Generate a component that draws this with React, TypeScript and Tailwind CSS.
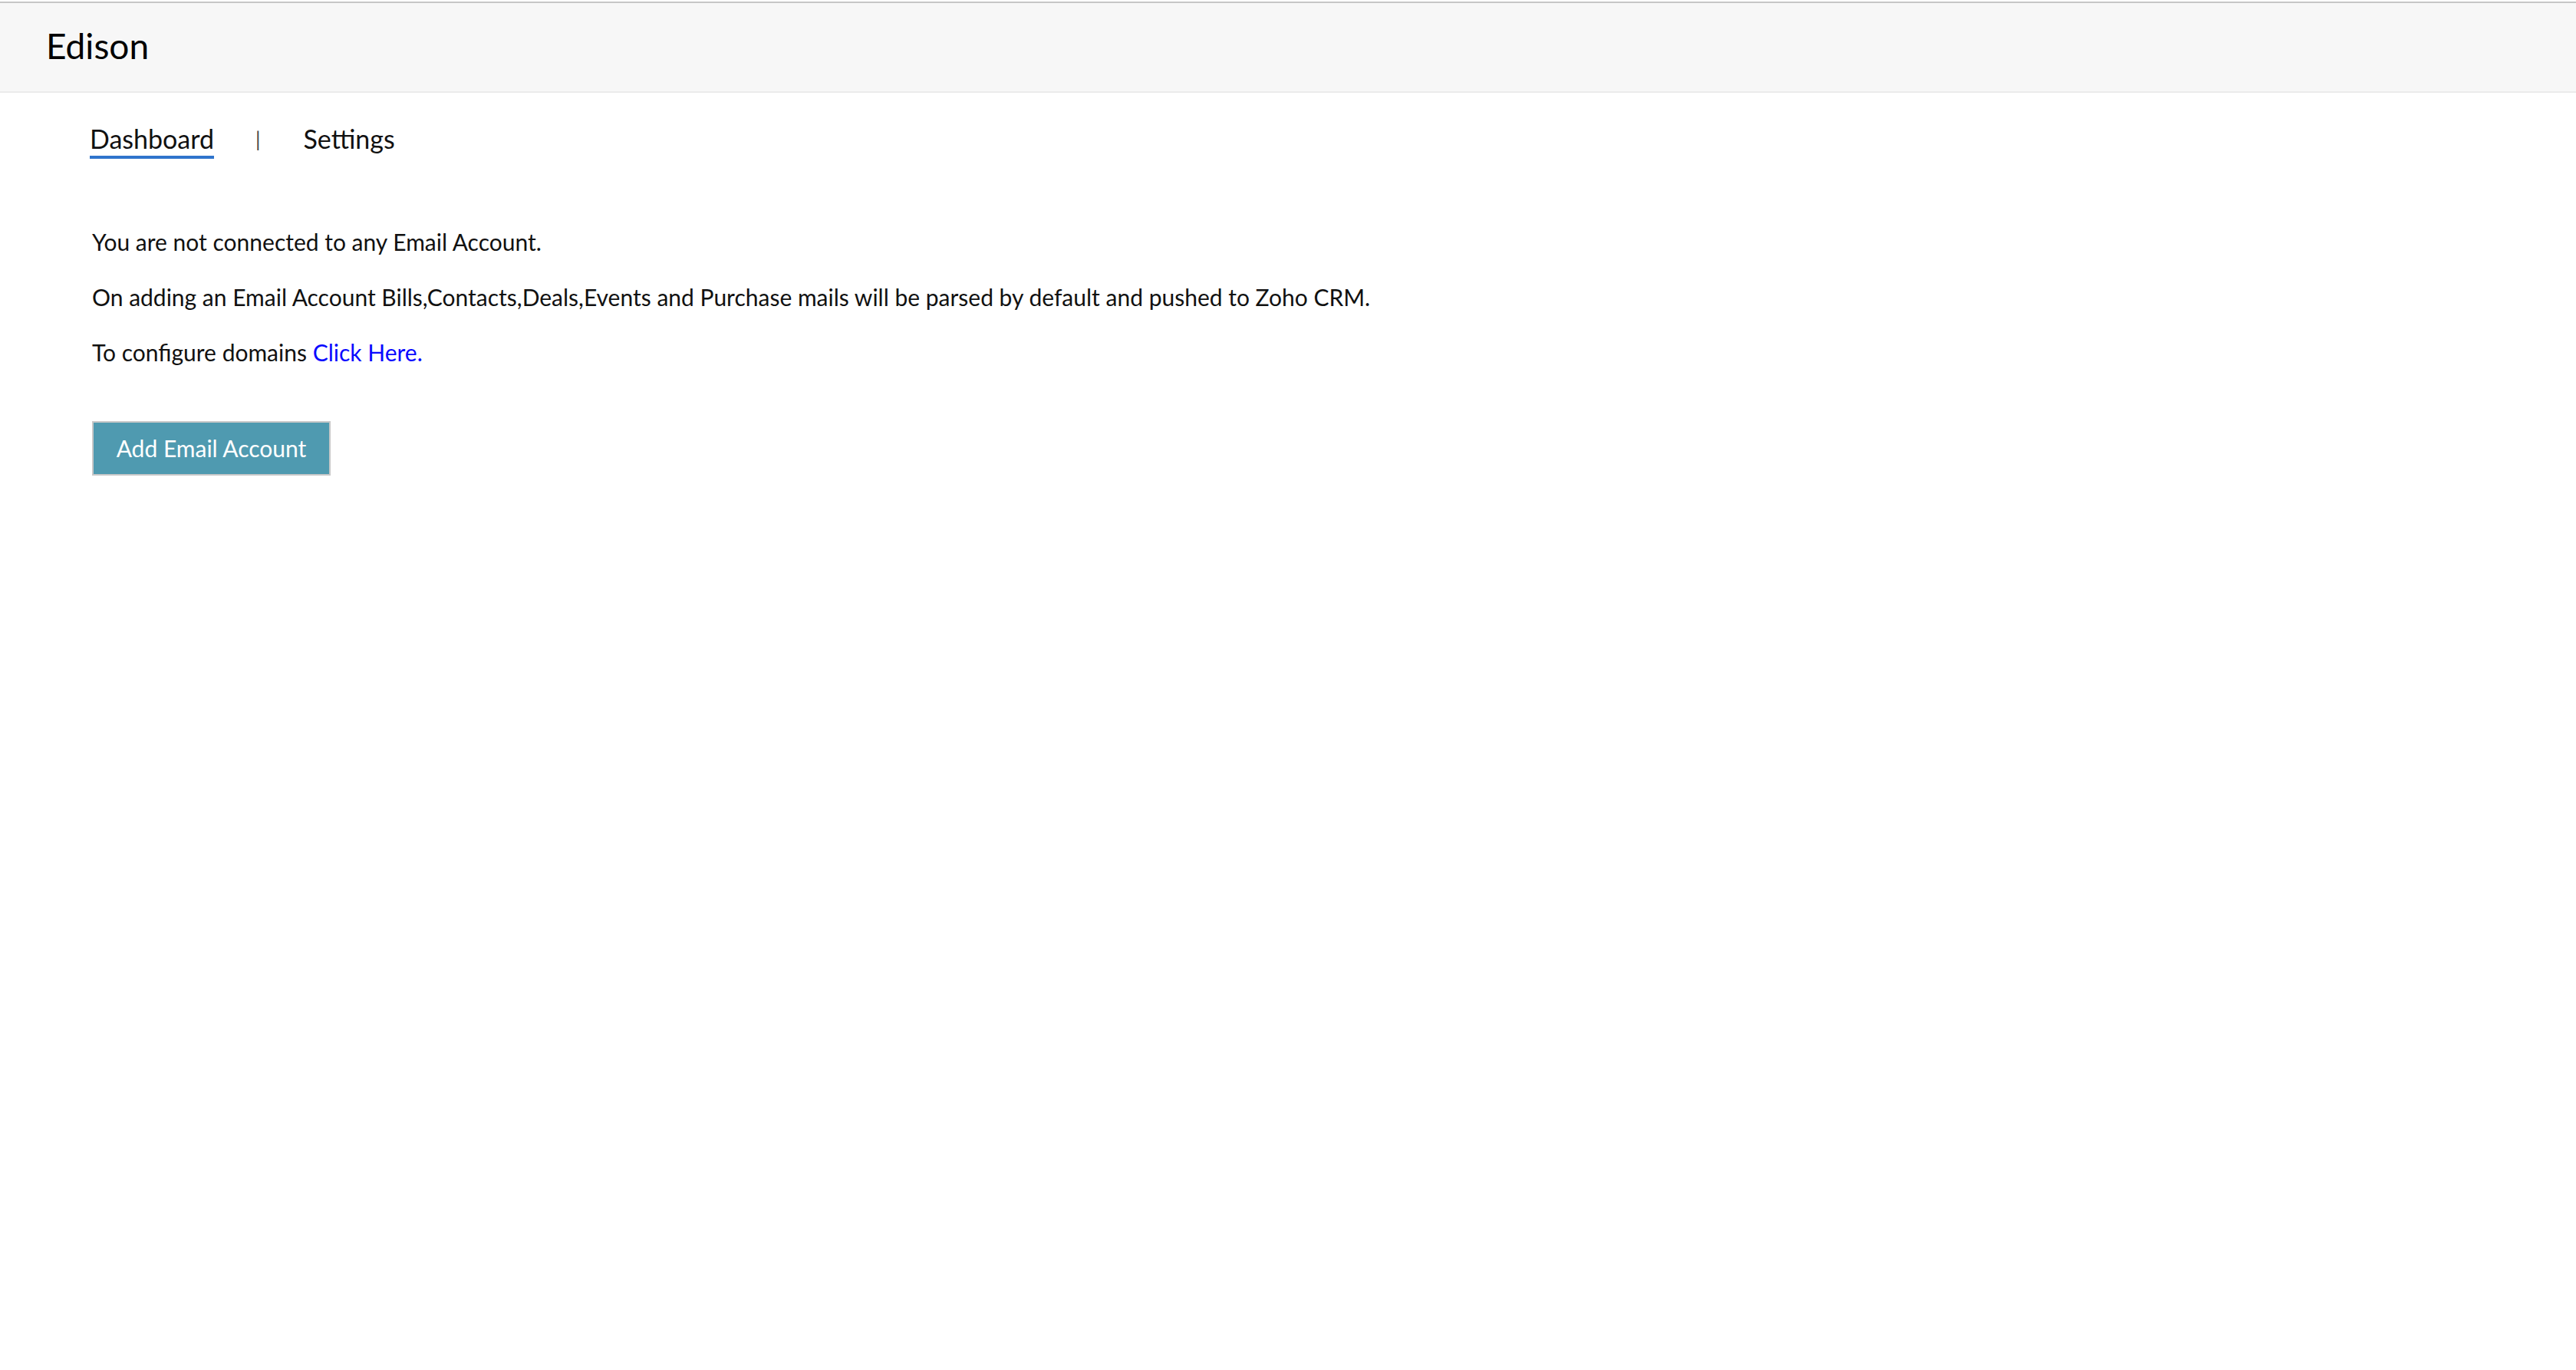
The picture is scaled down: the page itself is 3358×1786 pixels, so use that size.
export default function App() {
  return (
    <div className="min-h-screen bg-white text-[#111111]" style={{ fontFamily: 'Lato, "Open Sans", sans-serif' }}>
      <div className="mt-[2px] border-t-2 border-[#c6c6c6] border-b-2 border-b-[#ebebeb] bg-[#f7f7f7] h-[119px] flex items-center px-[60px]">
        <span className="text-[46px] leading-none text-black pb-[4px]">Edison</span>
      </div>
      <div className="flex items-center pl-[117px] pt-[40px]">
        <div className="flex flex-col">
          <span className="text-[34px] leading-[40px] text-[#111]">Dashboard</span>
          <div className="h-[4px] bg-[#2f74cc] mt-[2px]" />
        </div>
        <span className="text-[26px] leading-none text-[#444] ml-[54px] mr-[56px] mb-[6px]">|</span>
        <span className="text-[34px] leading-[40px] text-[#111] mb-[6px]">Settings</span>
      </div>
      <div className="pl-[120px] pt-[88px] text-[30px] leading-[40px] flex flex-col gap-[32px]">
        <p>You are not connected to any Email Account.</p>
        <p>On adding an Email Account Bills,Contacts,Deals,Events and Purchase mails will be parsed by default and pushed to Zoho CRM.</p>
        <p>
          To configure domains <a className="text-[#0a0aff]">Click Here.</a>
        </p>
      </div>
      <div className="pl-[120px] pt-[70px]">
        <button className="h-[71px] w-[311px] bg-[#4f9ab0] border-2 border-[#c8c8c8] text-white text-[30px]">
          Add Email Account
        </button>
      </div>
    </div>
  );
}
